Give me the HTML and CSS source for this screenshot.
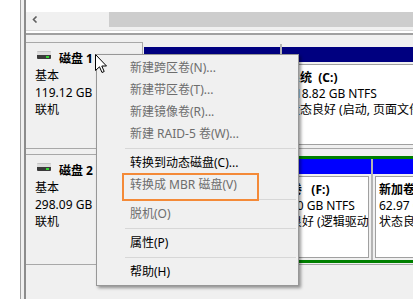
FILE: index.html
```html
<!DOCTYPE html>
<html lang="zh-CN">
<head>
<meta charset="utf-8">
<title>磁盘管理</title>
<link rel="stylesheet" href="styles.css">
</head>
<body>
<div class="screen">
  <div class="gutter"></div>
  <div class="edge"></div>
  <div class="main">
    <div class="top"></div>
    <div class="hscroll">
      <div class="track">
        <svg width="6" height="7" viewBox="0 0 6 7"><path d="M4.5 0.5 L1.5 3.5 L4.5 6.5" fill="none" stroke="#606060" stroke-width="1.6"/></svg>
      </div>
      <div class="thumb"></div>
    </div>
    <div class="split"></div>
    <div class="graph">
      <div class="disk d1">
        <div class="label">
          <div class="title"><span class="drive"></span>磁盘 1</div>
          <div>基本</div>
          <div>119.12 GB</div>
          <div>联机</div>
        </div>
        <div class="parts">
          <div class="part primary w-sys">
            <div class="head"></div>
            <div class="body"><div class="box"></div></div>
          </div>
          <div class="part primary w-c">
            <div class="head"></div>
            <div class="body"><div class="box"><b>系统&nbsp; (C:)</b><br>118.82 GB NTFS<br>状态良好 (启动, 页面文件, 故障转储, 主分区)</div></div>
          </div>
        </div>
      </div>
      <div class="disk d2">
        <div class="label">
          <div class="title"><span class="drive"></span>磁盘 2</div>
          <div>基本</div>
          <div>298.09 GB</div>
          <div>联机</div>
        </div>
        <div class="parts">
          <div class="part primary w-p2">
            <div class="head"></div>
            <div class="body"><div class="box"></div></div>
          </div>
          <div class="ext">
            <div class="part logical w-f">
              <div class="head"></div>
              <div class="body"><div class="box"><b>新加卷&nbsp;&nbsp; (F:)</b><br>235.10 GB NTFS<br>状态良好 (逻辑驱动器)</div></div>
            </div>
            <div class="part logical w-g">
              <div class="head"></div>
              <div class="body"><div class="box"><b>新加卷&nbsp; (G:)</b><br>62.97 GB NTFS<br>状态良好 (逻辑驱动器)</div></div>
            </div>
          </div>
        </div>
      </div>
    </div>
  </div>

  <div class="menu">
    <div class="item dis">新建跨区卷(N)...</div>
    <div class="item dis">新建带区卷(T)...</div>
    <div class="item dis">新建镜像卷(R)...</div>
    <div class="item dis">新建 RAID-5 卷(W)...</div>
    <div class="sep"></div>
    <div class="item">转换到动态磁盘(C)...</div>
    <div class="item dis mark">转换成 MBR 磁盘(V)</div>
    <div class="sep"></div>
    <div class="item dis">脱机(O)</div>
    <div class="sep"></div>
    <div class="item">属性(P)</div>
    <div class="sep"></div>
    <div class="item">帮助(H)</div>
  </div>

  <svg class="cursor" width="13" height="20" viewBox="0 0 13 20"><path d="M0.5 0.5 V16.5 L4.5 12.8 L7 18.5 L9.2 17.5 L6.8 12 H11.5 Z" fill="#fff" stroke="#000" stroke-width="1" stroke-linejoin="miter"/></svg>
</div>
</body>
</html>
```

FILE: styles.css
```css
* { box-sizing: border-box; margin: 0; padding: 0; }

body {
  margin: 0;
  font-family: "Noto Sans", "Noto Sans CJK SC", sans-serif;
  font-size: 12px;
  color: #000;
  background: #fff;
}

.screen {
  position: relative;
  width: 413px;
  height: 299px;
  display: flex;
  overflow: hidden;
}

.gutter { width: 20px; flex: none; background: #fff; }

.edge {
  width: 6px;
  flex: none;
  background: #f0f0f0;
  border-left: 1px solid #a0a0a0;
  border-right: 2px solid #8c8c8c;
}

.main {
  flex: 1;
  min-width: 0;
  background: #f0f0f0;
  display: flex;
  flex-direction: column;
}

.top { height: 12px; background: #fff; flex: none; }

.hscroll { height: 15px; display: flex; flex: none; }
.track {
  width: 83px;
  display: flex;
  align-items: center;
  padding-left: 6px;
  background: #f0f0f0;
}
.thumb { flex: 1; background: #cdcdcd; }

.split {
  margin-top: 3px;
  height: 5px;
  flex: none;
  border-top: 1px solid #d9d9d9;
  border-bottom: 2px solid #a0a0a0;
  background: #fff;
}

.graph {
  padding-top: 7px;
  display: flex;
  flex-direction: column;
  gap: 5px;
}

.disk { display: flex; flex: none; }
.d1 { height: 107px; }
.d2 { height: 111px; }

.label {
  width: 117px;
  flex: none;
  border: 1px solid #a8a8a8;
  border-left: 0;
  padding: 7px 0 0 9px;
  line-height: 17px;
  white-space: nowrap;
}

.title {
  display: flex;
  align-items: center;
  font-weight: bold;
}

.drive {
  width: 14px;
  height: 8px;
  flex: none;
  margin: 0 8px 7px 2px;
  border-radius: 1px;
  background:
    linear-gradient(#36d336, #36d336) 9px 5px / 3px 2px no-repeat,
    linear-gradient(#c4c4c4 0 1px, #dcdcdc 1px 4px, #3a3a3a 4px 8px);
}

.parts {
  flex: 1;
  min-width: 0;
  margin-left: 1px;
  display: flex;
  padding: 2px 0 1px;
  border-bottom: 1px solid #a8a8a8;
  overflow: hidden;
}

.part {
  display: flex;
  flex-direction: column;
  flex: none;
}
.part + .part,
.part + .ext {
  margin-left: 2px;
  box-shadow: -2px 0 0 0 #b4b4b4;
}

.primary { padding-top: 3px; }

.head { height: 15px; flex: none; }
.primary .head { background: #000080; }
.logical .head { background: #0000ff; }

.body {
  flex: 1;
  padding: 2px;
  display: flex;
  background: #f0f0f0;
}

.box {
  flex: 1;
  background: #fff;
  border: 1px solid #a0a0a0;
  padding: 5px 3px 0;
  line-height: 16px;
  white-space: nowrap;
  overflow: hidden;
}

.ext {
  display: flex;
  flex: none;
  border: 3px solid #008000;
}

.w-sys { width: 136px; }
.w-c { width: 200px; }
.w-p2 { width: 111px; }
.w-f { width: 111px; }
.w-g { width: 120px; }

/* context menu overlay */
.menu {
  position: absolute;
  left: 96px;
  top: 54px;
  width: 203px;
  background: #f0f0f0;
  border: 1px solid #979797;
  padding: 2px;
  box-shadow: 2px 2px 3px rgba(0, 0, 0, 0.4);
}

.item {
  height: 22px;
  line-height: 22px;
  padding-left: 31px;
  white-space: nowrap;
}
.item.dis { color: #6d6d6d; }

.mark { position: relative; }
.mark::after {
  content: "";
  position: absolute;
  left: 23px;
  top: -1px;
  width: 133px;
  height: 24px;
  border: 2px solid #f48a38;
}

.sep {
  height: 1px;
  margin: 3px 0 3px 26px;
  background: #d7d7d7;
}

.cursor {
  position: absolute;
  left: 95px;
  top: 54px;
}
```
